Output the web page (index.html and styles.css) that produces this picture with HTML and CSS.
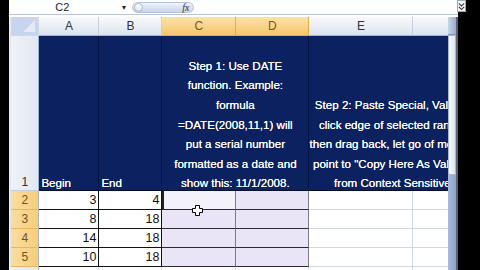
FILE: index.html
```html
<!DOCTYPE html>
<html lang="en">

<head>
    <meta charset="UTF-8">
    <meta name="viewport" content="width=device-width, initial-scale=1.0">
    <title>Excel - DATE</title>
    <link rel="stylesheet" href="styles.css">
</head>

<body>
    <div class="window">
        <div class="edge"></div>
        <div class="app">
            <!-- barra de formulas -->
            <div class="formula-bar">
                <div class="name-box">C2</div>
                <span class="drop">&#9662;</span>
                <div class="fx-pill">
                    <span class="knob"></span>
                    <span class="fx">fx</span>
                </div>
                <div class="formula"></div>
            </div>
            <div class="bar-line"></div>

            <div class="main">
                <div class="sheet">
                    <div class="corner"></div>
                    <div class="hd">A</div>
                    <div class="hd">B</div>
                    <div class="hd sel">C</div>
                    <div class="hd sel">D</div>
                    <div class="hd">E</div>
                    <div class="hd last"></div>

                    <!-- linha 1 -->
                    <div class="rh">1</div>
                    <div class="navy"><span class="txt">Begin</span></div>
                    <div class="navy"><span class="txt">End</span></div>
                    <div class="navy wrap span2"><span class="txt">Step 1: Use DATE<br>function. Example:<br>formula<br>=DATE(2008,11,1) will<br>put a serial number<br>formatted as a date and<br>show this: 11/1/2008.</span></div>
                    <div class="navy wrap span2 last"><span class="txt step2">Step 2: Paste Special, Values:<br>click edge of selected range,<br>then drag back, let go of mouse,<br>point to "Copy Here As Values"<br>from Context Sensitive</span></div>

                    <div class="rh sel">2</div>
                    <div class="num">3</div>
                    <div class="num">4</div>
                    <div class="pick active">
                        <svg class="cursor" width="11" height="11" viewBox="0 0 11 11">
                            <path d="M3.5 0.5h4v3h3v4h-3v3h-4v-3h-3v-4h3z" fill="#fff" stroke="#000" stroke-width="1"/>
                        </svg>
                    </div>
                    <div class="pick"></div>
                    <div class="blank"></div>
                    <div class="blank last"></div>

                    <div class="rh sel">3</div>
                    <div class="num">8</div>
                    <div class="num">18</div>
                    <div class="pick"></div>
                    <div class="pick"></div>
                    <div class="blank"></div>
                    <div class="blank last"></div>

                    <div class="rh sel">4</div>
                    <div class="num">14</div>
                    <div class="num">18</div>
                    <div class="pick"></div>
                    <div class="pick"></div>
                    <div class="blank"></div>
                    <div class="blank last"></div>

                    <div class="rh sel">5</div>
                    <div class="num">10</div>
                    <div class="num">18</div>
                    <div class="pick"></div>
                    <div class="pick"></div>
                    <div class="blank"></div>
                    <div class="blank last"></div>

                    <div class="rh">6</div>
                    <div class="blank"></div>
                    <div class="blank"></div>
                    <div class="blank"></div>
                    <div class="blank"></div>
                    <div class="blank"></div>
                    <div class="blank last"></div>
                </div>

                <div class="scroll">
                    <div class="scroll-btn"></div>
                    <div class="thumb"></div>
                    <div class="track"></div>
                </div>
            </div>
        </div>
        <div class="edge-right">
            <div class="expand">
                <svg width="8" height="9" viewBox="0 0 8 9">
                    <path d="M1 1l3 3 3-3M1 5l3 3 3-3" fill="none" stroke="#333" stroke-width="1.2"/>
                </svg>
            </div>
        </div>
    </div>
</body>

</html>
```

FILE: styles.css
```css
body {
    margin: 0;
    background: #000;
    font-family: 'Liberation Sans', Arial, sans-serif;
    overflow: hidden;
}

.window {
    display: flex;
    width: 480px;
    height: 270px;
}

.edge {
    width: 10px;
    background: #000;
}

.app {
    width: 447px;
    display: flex;
    flex-direction: column;
    background: #e6ebf3;
    padding-left: 2px;
}

.edge-right {
    width: 23px;
    background: #000;
}

/* barra de formulas */
.formula-bar {
    height: 14px;
    display: flex;
    align-items: center;
    background: #fff;
    margin-left: -2px;
}

.name-box {
    width: 106px;
    text-align: center;
    font-size: 11px;
    color: #222;
}

.drop {
    font-size: 8px;
    color: #222;
    width: 17px;
    text-align: center;
}

.fx-pill {
    width: 62px;
    height: 11px;
    border-radius: 6px;
    background: linear-gradient(#f1f4fa, #c6d3ea);
    border: 1px solid #b4c3dc;
    box-sizing: border-box;
    display: flex;
    align-items: center;
    justify-content: space-between;
    padding: 0 4px 0 1px;
}

.knob {
    width: 9px;
    height: 9px;
    border-radius: 50%;
    background: linear-gradient(#ffffff, #dfe6f2);
    border: 1px solid #aab8d0;
    box-sizing: border-box;
}

.fx {
    font-family: 'Liberation Serif', serif;
    font-style: italic;
    font-size: 10px;
    color: #333;
}

.formula {
    flex: 1;
    height: 14px;
}

.bar-line {
    height: 3px;
    border-top: 1px solid #b9c4d4;
    background: #fff;
    margin-left: -2px;
    box-sizing: border-box;
}

.main {
    flex: 1;
    display: flex;
    overflow: hidden;
}

/* planilha */
.sheet {
    width: 445px;
    display: grid;
    grid-template-columns: 28px 60px 63px 74px 73px 104px 43px;
    grid-template-rows: 19px 155px 19px 19px 19px 19px 19px;
    overflow: hidden;
    font-size: 12.5px;
}

.sheet > div {
    box-sizing: border-box;
    border-right: 1px solid #d0d7e5;
    border-bottom: 1px solid #d0d7e5;
}

.corner {
    background: #c7d6ee;
    position: relative;
}

.corner::after {
    content: "";
    position: absolute;
    right: 3px;
    bottom: 3px;
    border-left: 12px solid transparent;
    border-bottom: 12px solid #e4eaf4;
}

.sheet > .hd {
    background: linear-gradient(#f8f9fb, #dde4ee);
    border-right: 1px solid #c5cedb;
    border-bottom: 1px solid #9eb6ce;
    color: #333;
    text-align: center;
    line-height: 19px;
    font-size: 12px;
}

.sheet > .hd.sel {
    background: linear-gradient(#fbe2a8, #f5c66c);
    border-right-color: #e2ae4a;
    color: #7a5a1c;
}

.sheet > .rh {
    background: linear-gradient(90deg, #eef2f8, #e2e8f2);
    border-right: 1px solid #9eb6ce;
    border-bottom: 1px solid #c5cedb;
    color: #333;
    font-size: 12px;
    display: flex;
    align-items: flex-end;
    justify-content: center;
    padding-bottom: 1px;
}

.sheet > .rh.sel {
    background: linear-gradient(90deg, #fbdca0, #f7cd7c);
    border-bottom-color: #e6b660;
    color: #6b5424;
    padding-bottom: 2px;
}

.sheet > .navy {
    background: #0c2160;
    color: #fff;
    border-right: 1px solid #071545;
    border-bottom: 1px solid #050d2c;
    display: flex;
    align-items: flex-end;
    padding-left: 2px;
    font-size: 11.6px;
    line-height: 19.6px;
    text-shadow: 0 0 0.5px #fff;
}

.txt {
    margin-bottom: -3px;
}

.sheet > .wrap {
    justify-content: center;
    text-align: center;
    white-space: nowrap;
    padding-left: 0;
}

.sheet > .wrap.last {
    justify-content: flex-start;
}

.step2 {
    display: block;
    min-width: 166px;
}

.span2 {
    grid-column: span 2;
}

.sheet > .num {
    background: #fff;
    border-right: 1px solid #111;
    border-bottom: 1px solid #111;
    text-align: right;
    padding-right: 2px;
    line-height: 19px;
    color: #111;
}

.sheet > .pick {
    background: #e9e5f6;
    border-right: 1px solid #7d7a88;
    border-bottom: 1px solid #2a2a30;
}

.sheet > .pick.active {
    background: #f3f1fa;
    border-left: 2px solid #222;
    position: relative;
}

.cursor {
    position: absolute;
    left: 28px;
    top: 14px;
}

.sheet > .blank {
    background: #fff;
}

.sheet > .last {
    border-right: none;
}

/* barra de rolagem */
.scroll {
    width: 11px;
    display: flex;
    flex-direction: column;
    border-right: 2px solid #5b6372;
    box-sizing: border-box;
}

.scroll-btn {
    height: 17px;
    background: linear-gradient(90deg, #c9d6ec, #98acd0);
    border-bottom: 1px solid #8296bd;
}

.thumb {
    height: 140px;
    background: linear-gradient(90deg, #f7f9fc, #dfe5ef);
    border: 1px solid #a8b8d4;
    box-sizing: border-box;
}

.track {
    flex: 1;
    background: linear-gradient(90deg, #a8bbdd, #8ea3cb);
}

.expand {
    width: 9px;
    height: 12px;
    margin-left: -1px;
    background: #f4f6fa;
    border: 1px solid #9aa6ba;
    box-sizing: border-box;
    display: flex;
    align-items: center;
    justify-content: center;
}
```
